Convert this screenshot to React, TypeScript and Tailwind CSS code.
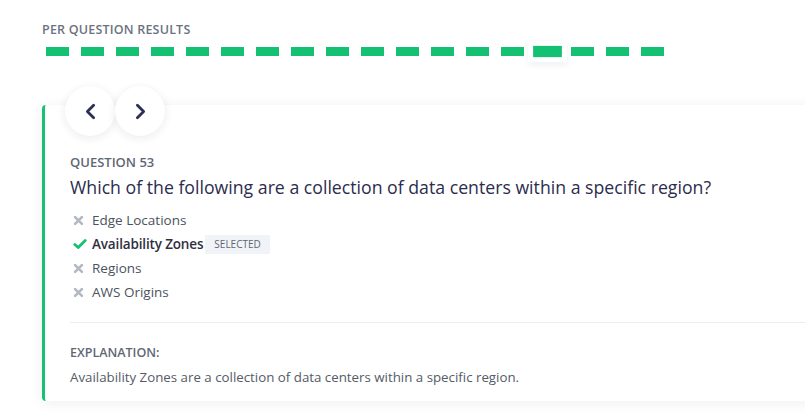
import { ChevronLeft, ChevronRight } from "lucide-react";

const TOTAL = 18;
const CURRENT = 14;

const options = [
  { text: "Edge Locations", correct: false, selected: false },
  { text: "Availability Zones", correct: true, selected: true },
  { text: "Regions", correct: false, selected: false },
  { text: "AWS Origins", correct: false, selected: false },
];

function CrossIcon() {
  return (
    <svg viewBox="0 0 12 12" className="w-[11px] h-[11px]">
      <path d="M2.3 2.3 L9.7 9.7 M9.7 2.3 L2.3 9.7" stroke="#b3b8c2" strokeWidth="2.9" strokeLinecap="round" />
    </svg>
  );
}

function CheckIcon() {
  return (
    <svg viewBox="0 0 14 12" className="w-[14px] h-[12px]">
      <path d="M1.8 6.4 L5.2 9.6 L12.2 2.4" fill="none" stroke="#16c172" strokeWidth="2.8" strokeLinecap="round" strokeLinejoin="round" />
    </svg>
  );
}

export default function App() {
  return (
    <div className="w-[805px] h-[420px] overflow-hidden bg-white font-['Open_Sans',sans-serif]">
      <div className="pl-[42px] pt-[21px]">
        <div className="text-[12.5px] font-semibold tracking-[0.2px] text-[#6b7280] leading-[18px]">
          PER QUESTION RESULTS
        </div>

        {/* result bar */}
        <div className="flex items-center mt-[1px] h-[22px] pl-[4px]">
          {Array.from({ length: TOTAL }).map((_, i) => (
            <div key={i} className="w-[35px] flex">
              <div
                className={
                  i === CURRENT
                    ? "w-[23px] h-[9px] bg-[#14c173] scale-[1.25] shadow-[0_0_0_4px_#fff,0_2px_6px_4px_rgba(20,30,60,0.07)]"
                    : "w-[23px] h-[9px] bg-[#14c173]"
                }
              />
            </div>
          ))}
        </div>

        {/* card */}
        <div className="relative mt-[43px] w-[800px] border-l-[3px] border-[#16c172] rounded-l-[4px] bg-white shadow-[0_2px_14px_rgba(20,30,60,0.07)] pl-[25px] pr-6 pt-[48px] pb-[14px]">
          <div className="absolute -top-[19px] left-[20px] flex">
            <button className="w-[50px] h-[50px] rounded-full bg-white shadow-[0_2px_10px_rgba(20,30,60,0.09)] flex items-center justify-center text-[#2e2f55]">
              <ChevronLeft className="w-[25px] h-[25px]" strokeWidth={2.7} />
            </button>
            <button className="w-[50px] h-[50px] rounded-full bg-white shadow-[0_2px_10px_rgba(20,30,60,0.09)] flex items-center justify-center text-[#2e2f55]">
              <ChevronRight className="w-[25px] h-[25px]" strokeWidth={2.7} />
            </button>
          </div>

          <div className="text-[13px] font-semibold text-[#5f6775] leading-[18px]">QUESTION 53</div>
          <div className="mt-[4px] text-[17.7px] font-medium text-[#2c2c4e] leading-[24px]">
            Which of the following are a collection of data centers within a specific region?
          </div>

          <ul className="mt-[9px] flex flex-col">
            {options.map((o) => (
              <li key={o.text} className="flex items-center h-[24px] pl-[3px]">
                <span className="w-[19px] flex items-center">{o.correct ? <CheckIcon /> : <CrossIcon />}</span>
                <span className={o.selected ? "text-[13.5px] font-semibold tracking-[-0.15px] text-[#2f2f3f]" : "text-[13.5px] text-[#4b5260]"}>
                  {o.text}
                </span>
                {o.selected && (
                  <span className="ml-[2px] px-[9px] h-[19px] flex items-center bg-[#f0f3f7] text-[10px] text-[#5f6775]">
                    SELECTED
                  </span>
                )}
              </li>
            ))}
          </ul>

          <div className="mt-[18px] border-t border-[#ececf0]" />

          <div className="mt-[21px] text-[12.5px] font-semibold text-[#5f6775] leading-[18px]">EXPLANATION:</div>
          <div className="mt-[5px] text-[13.3px] text-[#545b66] leading-[20px]">
            Availability Zones are a collection of data centers within a specific region.
          </div>
        </div>
      </div>
    </div>
  );
}
